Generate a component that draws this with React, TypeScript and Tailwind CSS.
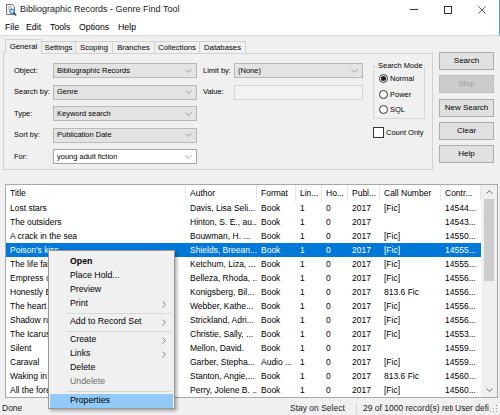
import React from "react";

const rows: string[][] = [
  ["Lost stars", "Davis, Lisa Seli...", "Book", "1", "0", "2017", "[Fic]", "14544..."],
  ["The outsiders", "Hinton, S. E., au...", "Book", "1", "0", "2017", "", "14543..."],
  ["A crack in the sea", "Bouwman, H. ...", "Book", "1", "0", "2017", "[Fic]", "14550..."],
  ["Poison's kiss", "Shields, Breean...", "Book", "1", "0", "2017", "[Fic]", "14555..."],
  ["The life fantastic", "Ketchum, Liza, ...", "Book", "1", "0", "2017", "[Fic]", "14555..."],
  ["Empress of a thousand skies", "Belleza, Rhoda, ...", "Book", "1", "0", "2017", "[Fic]", "14556..."],
  ["Honestly Ben", "Konigsberg, Bil...", "Book", "1", "0", "2017", "813.6 Fic", "14556..."],
  ["The heart of betrayal", "Webber, Kathe...", "Book", "1", "0", "2017", "[Fic]", "14556..."],
  ["Shadow run", "Strickland, Adri...", "Book", "1", "0", "2017", "[Fic]", "14556..."],
  ["The Icarus show", "Christie, Sally, ...", "Book", "1", "0", "2017", "[Fic]", "14553..."],
  ["Silent", "Mellon, David.", "Book", "1", "0", "2017", "", "14559..."],
  ["Caraval", "Garber, Stepha...", "Audio ...", "1", "0", "2017", "[Fic]", "14559..."],
  ["Waking in time", "Stanton, Angie,...", "Book", "1", "0", "2017", "813.6 Fic", "14560..."],
  ["All the forever things", "Perry, Jolene B. ...", "Book", "1", "0", "2017", "[Fic]", "14560..."],
];

const cols = [
  { label: "Title", w: "w-[180px]" },
  { label: "Author", w: "w-[71px]" },
  { label: "Format", w: "w-[39px]" },
  { label: "Lin...", w: "w-[26px]" },
  { label: "Ho...", w: "w-[26px]" },
  { label: "Publ...", w: "w-[32px]" },
  { label: "Call Number", w: "w-[61px]" },
  { label: "Contr...", w: "w-[40px]" },
];

function Chevron() {
  return (
    <svg width="7" height="4" viewBox="0 0 7 4" className="shrink-0">
      <path d="M0.5 0.5 L3.5 3.4 L6.5 0.5" fill="none" stroke="#8a8a8a" strokeWidth="0.8" />
    </svg>
  );
}

function Combo({ value, white, w }: { value: string; white?: boolean; w: string }) {
  return (
    <div
      className={`${w} h-[15px] flex items-center justify-between pl-[3px] pr-[4px] border ${
        white ? "bg-white border-[#a5a5a5]" : "bg-[#e3e3e3] border-[#b8b8b8]"
      }`}
    >
      <span className="truncate">{value}</span>
      <Chevron />
    </div>
  );
}

function Radio({ label, checked }: { label: string; checked?: boolean }) {
  return (
    <div className="flex items-center gap-[2px] h-[15.5px] pl-[5px]">
      <span className="w-[9px] h-[9px] rounded-full border border-[#333] bg-white flex items-center justify-center">
        {checked && <span className="w-[5px] h-[5px] rounded-full bg-[#1a1a1a]" />}
      </span>
      <span>{label}</span>
    </div>
  );
}

function Btn({ label, disabled }: { label: string; disabled?: boolean }) {
  return (
    <div
      className={`h-[18px] flex items-center justify-center border ${
        disabled ? "bg-[#cccccc] border-[#bfbfbf] text-[#9a9a9a]" : "bg-[#e1e1e1] border-[#adadad] text-black"
      }`}
    >
      {label}
    </div>
  );
}

function Arrow() {
  return (
    <svg width="4" height="7" viewBox="0 0 4 7">
      <path d="M0.5 0.5 L3.3 3.5 L0.5 6.5" fill="none" stroke="#6b6b6b" strokeWidth="0.8" />
    </svg>
  );
}

function MenuItem({ label, bold, disabled, sub, hot }: { label: string; bold?: boolean; disabled?: boolean; sub?: boolean; hot?: boolean }) {
  return (
    <div
      className={`h-[14px] flex items-center justify-between pl-[20px] pr-[7px] mx-[1px] ${hot ? "bg-[#91c9f7]" : ""} ${
        bold ? "font-bold" : ""
      } ${disabled ? "text-[#6d6d6d]" : "text-black"}`}
    >
      <span>{label}</span>
      {sub && <Arrow />}
    </div>
  );
}

function Sep({ tall }: { tall?: boolean }) {
  return (
    <div className={`${tall ? "h-[5px]" : "h-[4px]"} flex items-center pl-[18px] pr-[2px]`}>
      <div className="h-px w-full bg-[#d7d7d7]" />
    </div>
  );
}

export default function App() {
  return (
    <div className="relative w-[500px] h-[415px] overflow-hidden bg-[#f0f0f0] text-black font-['Liberation_Sans',Arial,sans-serif]">
      {/* title + menu */}
      <div className="bg-white border-r border-[#4a9be0] border-b-[#dadada] border-b h-[36px]">
        <div className="h-[19px] flex items-center">
          <svg width="12" height="12" viewBox="0 0 12 12" className="ml-[5px] mr-[3px]">
            <path d="M1.5 0.5 H7.5 L9.5 2.5 V10.5 H1.5 Z" fill="#f4f4f4" stroke="#555" strokeWidth="0.8" />
            <path d="M3 3 H7 M3 5 H7" stroke="#888" strokeWidth="0.7" />
            <circle cx="7" cy="7.3" r="2.2" fill="#bfe0f7" stroke="#1f6fc2" strokeWidth="1" />
            <path d="M8.6 8.9 L11.2 11.4" stroke="#1f4fa0" strokeWidth="1.5" />
          </svg>
          <span className="text-[9px] text-[#222]">Bibliographic Records - Genre Find Tool</span>
          <div className="ml-auto flex items-center h-full">
            <div className="w-[34px] flex justify-center"><div className="w-[8px] h-px bg-[#333]" /></div>
            <div className="w-[34px] flex justify-center"><div className="w-[8px] h-[8px] border border-[#333]" /></div>
            <div className="w-[34px] flex justify-center">
              <svg width="8" height="8" viewBox="0 0 8 8"><path d="M0.5 0.5 L7.5 7.5 M7.5 0.5 L0.5 7.5" stroke="#333" strokeWidth="0.8" /></svg>
            </div>
          </div>
        </div>
        <div className="h-[16px] pt-[2px] flex items-center text-[8.75px] pl-[5px]">
          <span className="w-[21px]">File</span>
          <span className="w-[24px]">Edit</span>
          <span className="w-[29px]">Tools</span>
          <span className="w-[39px]">Options</span>
          <span>Help</span>
        </div>
      </div>

      {/* top area */}
      <div className="flex pl-[3px] pt-[3px]">
        <div className="w-[430px]">
          <div className="h-[14px] flex items-end pl-[2px] text-[7.75px]">
            <div className="relative z-10 w-[37px] h-[15px] -mb-px bg-[#f0f0f0] border border-b-0 border-[#d2d2d2] flex items-center justify-center">General</div>
            {[
              ["Settings", "w-[34px]"],
              ["Scoping", "w-[37px]"],
              ["Branches", "w-[42px]"],
              ["Collections", "w-[45px]"],
              ["Databases", "w-[46px]"],
            ].map(([t, w]) => (
              <div key={t} className={`${w} h-[12px] border border-b-0 border-l-0 border-[#d2d2d2] bg-[#f0f0f0] flex items-center justify-center`}>
                {t}
              </div>
            ))}
          </div>
          <div className="h-[117px] border border-[#d2d2d2] bg-[#f0f0f0] flex pt-[9px] pl-[10px] text-[7.5px]">
            <div className="flex flex-col gap-[6.5px]">
              {[
                ["Object:", "Bibliographic Records", false],
                ["Search by:", "Genre", false],
                ["Type:", "Keyword search", false],
                ["Sort by:", "Publication Date", false],
                ["For:", "young adult fiction", true],
              ].map(([l, v, white]) => (
                <div key={l as string} className="flex items-center">
                  <span className="w-[39px]">{l}</span>
                  <Combo value={v as string} white={white as boolean} w="w-[144px]" />
                </div>
              ))}
            </div>
            <div className="flex flex-col gap-[6.5px] ml-[6px]">
              <div className="flex items-center">
                <span className="w-[31px]">Limit by:</span>
                <Combo value="(None)" w="w-[129px]" />
              </div>
              <div className="flex items-center">
                <span className="w-[31px]">Value:</span>
                <div className="w-[129px] h-[15px] border border-[#d4d4d4] bg-[#f3f3f3]" />
              </div>
            </div>
            <div className="ml-[10px] -mt-[2px] flex flex-col">
              <fieldset className="w-[52px] h-[58px] border border-[#d6d6d6] p-0 m-0">
                <legend className="px-[1px] ml-[3px] text-[7.5px] leading-[10px] whitespace-nowrap">Search Mode</legend>
                <Radio label="Normal" checked />
                <Radio label="Power" />
                <Radio label="SQL" />
              </fieldset>
              <div className="flex items-center gap-[2px] mt-[8px]">
                <span className="w-[11px] h-[11px] border border-[#333] bg-white" />
                <span>Count Only</span>
              </div>
            </div>
          </div>
        </div>
        <div className="ml-[6px] w-[55px] mt-[13px] flex flex-col gap-[5.3px] text-[8px]">
          <Btn label="Search" />
          <Btn label="Stop" disabled />
          <Btn label="New Search" />
          <Btn label="Clear" />
          <Btn label="Help" />
        </div>
      </div>

      {/* list */}
      <div className="ml-[5px] mt-[14px] w-[493px] h-[214px] border border-[#a8a8a8] bg-white flex text-[8.5px]">
        <div className="flex flex-col">
          <div className="h-[16px] flex">
            {cols.map((c) => (
              <div key={c.label} className={`${c.w} h-full pl-[4px] flex items-center border-r border-[#e5e5e5] whitespace-nowrap overflow-hidden`}>
                {c.label}
              </div>
            ))}
          </div>
          {rows.map((r, i) => (
            <div key={i} className={`h-[14px] flex ${i === 3 ? "bg-[#0078d7] text-white" : ""}`}>
              {r.map((cell, j) => (
                <div key={j} className={`${cols[j].w} pl-[4px] flex items-center whitespace-nowrap overflow-hidden`}>
                  {cell}
                </div>
              ))}
            </div>
          ))}
        </div>
        <div className="w-[16px] bg-[#f0f0f0] flex flex-col items-center">
          <div className="h-[14px] flex items-center">
            <svg width="7" height="4" viewBox="0 0 7 4"><path d="M0.5 3.5 L3.5 0.6 L6.5 3.5" fill="none" stroke="#606060" strokeWidth="0.9" /></svg>
          </div>
          <div className="w-[10px] h-[82px] bg-[#cdcdcd]" />
          <div className="flex-1" />
          <div className="h-[14px] flex items-center">
            <svg width="7" height="4" viewBox="0 0 7 4"><path d="M0.5 0.5 L3.5 3.4 L6.5 0.5" fill="none" stroke="#606060" strokeWidth="0.9" /></svg>
          </div>
        </div>
      </div>

      {/* status bar */}
      <div className="h-[17px] pb-[1px] flex items-end text-[8.5px] leading-[11px] text-[#222] whitespace-nowrap">
        <span className="w-[287px] pl-[2px]">Done</span>
        <span className="w-[70px] pl-[3px] border-r border-[#d0d0d0]">Stay on Select</span>
        <span className="w-[96px] pl-[6px] overflow-hidden">29 of 1000 record(s) returned</span>
        <span className="w-[36px] pl-[2px] overflow-hidden">User defined</span>
        <svg width="8" height="8" viewBox="0 0 8 8" className="ml-auto mr-[2px] mb-[1px]">
          <rect x="6" y="6" width="1" height="1" fill="#999" />
          <rect x="3" y="6" width="1" height="1" fill="#999" />
          <rect x="6" y="3" width="1" height="1" fill="#999" />
          <rect x="0" y="6" width="1" height="1" fill="#999" />
          <rect x="3" y="3" width="1" height="1" fill="#999" />
          <rect x="6" y="0" width="1" height="1" fill="#999" />
        </svg>
      </div>

      {/* context menu */}
      <div className="absolute left-[48px] top-[250px] w-[127px] bg-[#f0f0f0] border border-[#979797] shadow-[2px_2px_3px_rgba(0,0,0,0.3)] pt-[4px] text-[8.75px]">
        <MenuItem label="Open" bold />
        <MenuItem label="Place Hold..." />
        <MenuItem label="Preview" />
        <MenuItem label="Print" sub />
        <Sep />
        <MenuItem label="Add to Record Set" sub />
        <Sep />
        <MenuItem label="Create" sub />
        <MenuItem label="Links" sub />
        <MenuItem label="Delete" />
        <MenuItem label="Undelete" disabled />
        <Sep tall />
        <MenuItem label="Properties" hot />
      </div>
    </div>
  );
}
